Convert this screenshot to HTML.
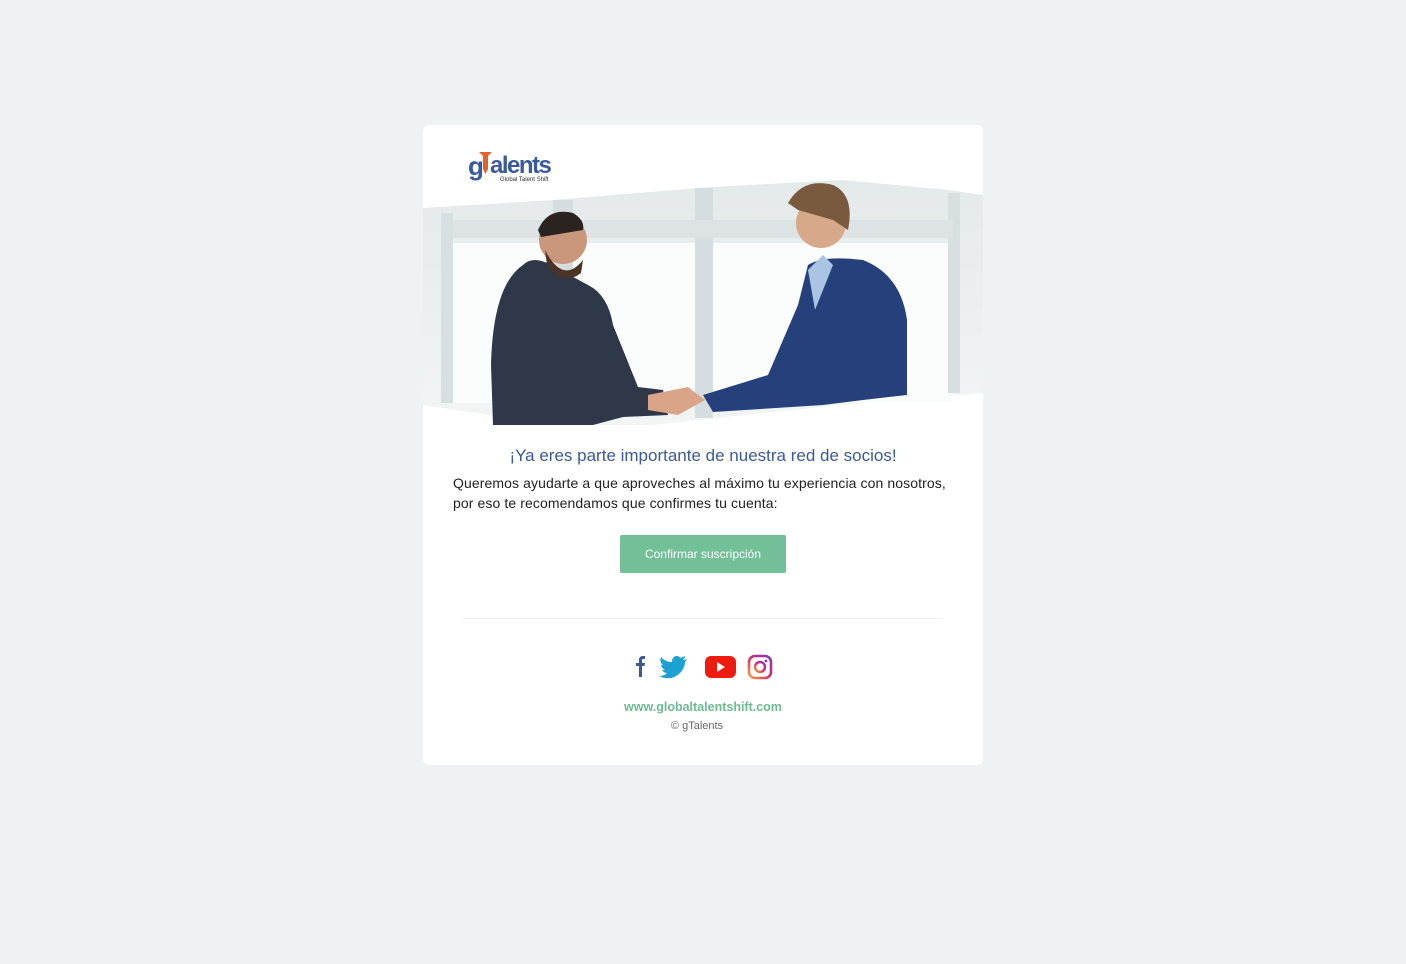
<!DOCTYPE html>
<html><head><meta charset="utf-8"><style>
body{margin:0;background:#eef2f3;width:1406px;height:964px;position:relative;font-family:"Liberation Sans",sans-serif;}
.card{position:absolute;left:423px;top:125px;width:560px;height:640px;background:#fff;border-radius:6px;overflow:hidden;}
.logo{position:absolute;left:45px;top:24px;}
.h{position:absolute;left:0;width:560px;top:321px;text-align:center;color:#3a5a9a;font-size:17px;}
.p{position:absolute;left:30px;top:348px;width:505px;font-size:14px;line-height:20px;color:#222;letter-spacing:0.1px;}
.btn{position:absolute;left:197px;top:410px;width:166px;height:38px;background:#72bf98;color:#fff;font-size:12px;line-height:38px;text-align:center;border-radius:2px;}
.hr{position:absolute;left:40px;top:493px;width:480px;height:1px;background:#eee;}
.url{position:absolute;left:0;width:560px;top:575px;text-align:center;color:#6dbb93;font-size:12.5px;font-weight:bold;}
.cp{position:absolute;left:0;width:548px;top:595px;text-align:center;color:#666;font-size:11px;}
</style></head><body>
<div class="card">
<svg style="position:absolute;left:0;top:0" width="560" height="310">
<defs><linearGradient id="bg" x1="0" y1="0" x2="0" y2="1"><stop offset="0" stop-color="#e4e9ea"/><stop offset="1" stop-color="#f3f5f5"/></linearGradient></defs>
<polygon points="0,83 130,75 275,63 380,57 420,55 525,65 560,70 560,268 470,275 340,288 230,300 130,300 0,280" fill="url(#bg)"/>
<rect x="30" y="118" width="500" height="160" fill="#fbfcfc"/>
<rect x="130" y="75" width="20" height="225" fill="#d6dde0"/>
<rect x="272" y="63" width="18" height="230" fill="#d6dde0"/>
<rect x="18" y="88" width="12" height="190" fill="#d8dfe1"/>
<rect x="525" y="68" width="12" height="200" fill="#d8dfe1"/>
<rect x="30" y="95" width="500" height="18" fill="#dde3e5"/>
<path d="M100,140 Q110,130 128,140 L165,160 Q185,170 190,200 L215,262 L240,265 L245,290 L200,292 L170,300 L70,300 L68,240 Q70,160 100,140Z" fill="#2f3848"/>
<circle cx="140" cy="115" r="24" fill="#c9987c"/>
<path d="M115,105 Q125,82 150,88 Q162,95 160,105 L118,112Z" fill="#2a2320"/>
<path d="M122,125 Q140,160 160,135 L158,148 Q140,162 124,140Z" fill="#4a3428"/>
<path d="M385,140 Q400,130 440,135 Q478,150 484,195 L484,270 L440,275 L400,280 L290,287 L280,270 L345,250 L375,180Z" fill="#25407a"/>
<circle cx="398" cy="98" r="25" fill="#d7a98a"/>
<path d="M365,78 Q380,52 410,60 Q432,70 425,105 L410,95 L375,85Z" fill="#7a5a3e"/>
<path d="M385,145 L400,130 L410,140 L392,185Z" fill="#a9c5e3"/>
<path d="M225,270 L265,262 L282,275 L255,290 L225,285Z" fill="#d9a488"/>
</svg>
<svg class="logo" width="95" height="34" viewBox="0 0 95 34">
<text x="0" y="26" font-family="Liberation Sans,sans-serif" font-weight="bold" font-size="26" fill="#3a5a9a" letter-spacing="-1">g</text>
<path d="M11,3 L24,3 L20,7 L20,20 L17.5,25 L15,20 L15,7Z" fill="#e0642a"/>
<text x="22" y="24" font-family="Liberation Sans,sans-serif" font-weight="bold" font-size="24" fill="#3a5a9a" letter-spacing="-1.5">alents</text>
<text x="32" y="32" font-family="Liberation Sans,sans-serif" font-size="6" fill="#333">Global Talent Shift</text>
</svg>
<div class="h">¡Ya eres parte importante de nuestra red de socios!</div>
<div class="p">Queremos ayudarte a que aproveches al máximo tu experiencia con nosotros, por eso te recomendamos que confirmes tu cuenta:</div>
<div class="btn">Confirmar suscripción</div>
<div class="hr"></div>
<svg style="position:absolute;left:205px;top:528px" width="150" height="28">
<path d="M11,24 V13 H8 V10 H11 V7 Q11,3 15,3 H17 V6 H15 Q14,6 14,7 V10 H17 L16.5,13 H14 V24Z" fill="#3b5998"/>
<path d="M59,6 Q57,7 55,7 Q57,5 57,3 Q55,4 53,5 Q51,3 48,3 Q44,4 44,9 Q37,9 33,4 Q31,9 35,12 Q33,12 33,11 Q33,15 37,17 Q35,17 34,17 Q36,20 39,20 Q36,23 31,23 Q44,29 53,19 Q57,14 57,9 Q58,8 59,6Z" fill="#1da1d2"/>
<rect x="77" y="3" width="31" height="22" rx="6" fill="#ee1c0f"/>
<path d="M89,9 L97,14 L89,19Z" fill="#fff"/>
<defs><linearGradient id="ig" x1="0" y1="1" x2="1" y2="0"><stop offset="0" stop-color="#f3a240"/><stop offset=".5" stop-color="#d62a6a"/><stop offset="1" stop-color="#7a3ac0"/></linearGradient></defs>
<rect x="121" y="3" width="22" height="22" rx="6" fill="none" stroke="url(#ig)" stroke-width="2.6"/>
<circle cx="132" cy="14" r="5" fill="none" stroke="url(#ig)" stroke-width="2.4"/>
<circle cx="138" cy="8" r="1.4" fill="#a030a0"/>
</svg>
<div class="url">www.globaltalentshift.com</div>
<div class="cp">© gTalents</div>
</div>
</body></html>
